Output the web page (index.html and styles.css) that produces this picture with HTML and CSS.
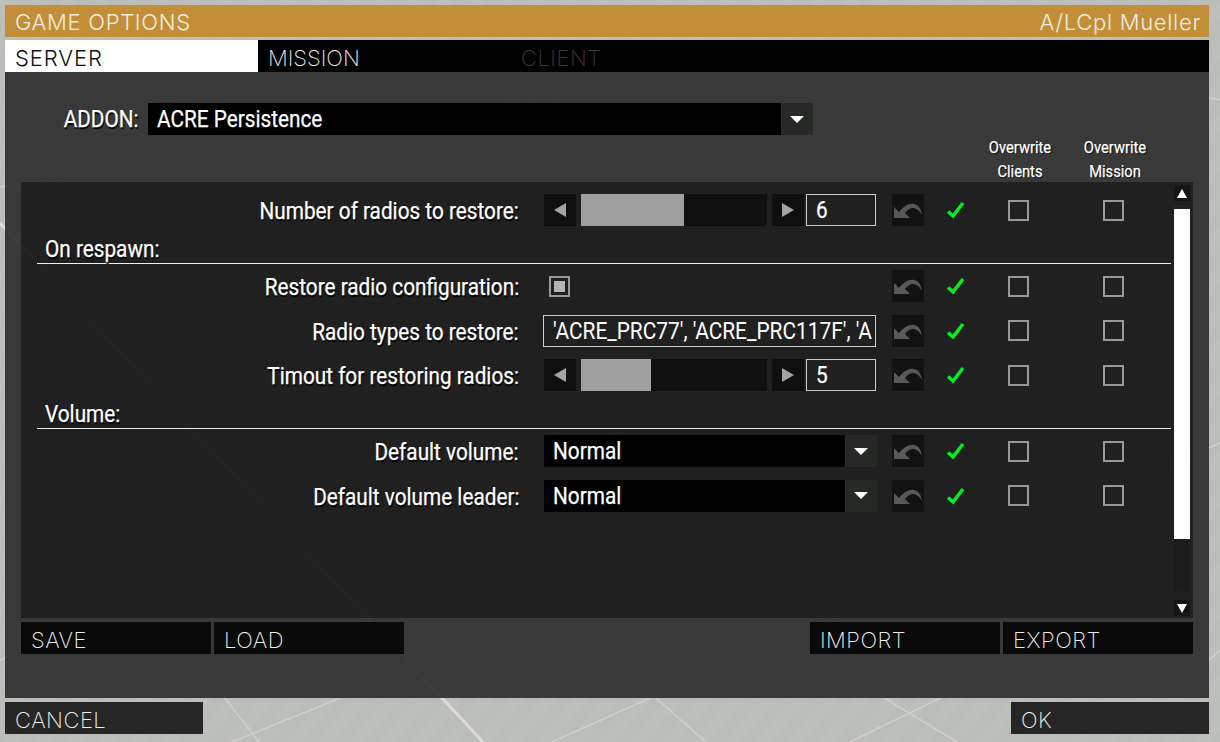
FILE: index.html
```html
<!DOCTYPE html>
<html lang="en">
<head>
    <meta charset="UTF-8">
    <title>Game Options</title>
    <link rel="stylesheet" href="styles.css">
</head>
<body>
<svg class="bg-lines" width="1220" height="742" viewBox="0 0 1220 742">
    <path class="line-thick" d="M0 223 L483 742" />
    <path d="M552 742 L1220 443 M567 620 L706 742 M232 742 L532 620 M190 653 L259 742 M0 187 L620 85 M1097 72 L1220 100 M810 653 L957 742 M850 742 L1060 640 M1209 660 L1220 650 M0 660 L40 645" />
</svg>
<div class="dialog">
    <header class="title-bar">
        <span>GAME OPTIONS</span>
        <span>A/LCpl Mueller</span>
    </header>
    <nav class="tabs">
        <div class="tab active">SERVER</div>
        <div class="tab">MISSION</div>
        <div class="tab disabled">CLIENT</div>
    </nav>
    <main class="panel">
        <div class="addon-row">
            <label class="addon-label"><span class="cond cond-right">ADDON:</span></label>
            <div class="combo addon-combo">
                <div class="combo-value"><span class="cond">ACRE Persistence</span></div>
                <div class="combo-arrow"><svg width="16" height="9" viewBox="0 0 16 9"><path d="M1 1 H15 L8 8 Z" fill="#fff"/></svg></div>
            </div>
        </div>
        <div class="overwrite-heads">
            <div class="overwrite-head"><span class="cond cond-center">Overwrite<br>Clients</span></div>
            <div class="overwrite-head"><span class="cond cond-center">Overwrite<br>Mission</span></div>
        </div>
        <section class="list">
            <div class="rows">
                <div class="row row-first">
                    <div class="row-label"><span class="cond cond-right">Number of radios to restore:</span></div>
                    <div class="control slider">
                        <div class="slider-btn"><svg width="14" height="16" viewBox="0 0 14 16"><path d="M13 1 V15 L1 8 Z"/></svg></div>
                        <div class="slider-track"><div class="slider-fill fill-six"></div></div>
                        <div class="slider-btn"><svg width="14" height="16" viewBox="0 0 14 16"><path d="M1 1 V15 L13 8 Z"/></svg></div>
                        <div class="edit-box slider-edit"><span class="cond">6</span></div>
                    </div>
                    <div class="reset-btn"><svg width="32" height="32" viewBox="0 0 32 32"><path d="M2 13 L7 18 C12 12 17 9 22 10 C27 11 29 15 30 21 C27 16 24 14 21 14 C18 14 15 16 13 19 L18 24 H2 Z"/></svg></div>
                    <svg class="check" width="20" height="20" viewBox="0 0 20 20"><path d="M3 11.5 L8 16 L18 3"/></svg>
                    <div class="box-cell"><div class="checkbox"></div></div>
                    <div class="box-cell"><div class="checkbox"></div></div>
                </div>
                <div class="group-head"><span class="cond">On respawn:</span></div>
                <div class="row row-tight">
                    <div class="row-label"><span class="cond cond-right">Restore radio configuration:</span></div>
                    <div class="control"><div class="checkbox checked"></div></div>
                    <div class="reset-btn"><svg width="32" height="32" viewBox="0 0 32 32"><path d="M2 13 L7 18 C12 12 17 9 22 10 C27 11 29 15 30 21 C27 16 24 14 21 14 C18 14 15 16 13 19 L18 24 H2 Z"/></svg></div>
                    <svg class="check" width="20" height="20" viewBox="0 0 20 20"><path d="M3 11.5 L8 16 L18 3"/></svg>
                    <div class="box-cell"><div class="checkbox"></div></div>
                    <div class="box-cell"><div class="checkbox"></div></div>
                </div>
                <div class="row">
                    <div class="row-label"><span class="cond cond-right">Radio types to restore:</span></div>
                    <div class="control"><div class="edit-box wide-edit"><span class="cond cond-wide">'ACRE_PRC77', 'ACRE_PRC117F', 'A</span></div></div>
                    <div class="reset-btn"><svg width="32" height="32" viewBox="0 0 32 32"><path d="M2 13 L7 18 C12 12 17 9 22 10 C27 11 29 15 30 21 C27 16 24 14 21 14 C18 14 15 16 13 19 L18 24 H2 Z"/></svg></div>
                    <svg class="check" width="20" height="20" viewBox="0 0 20 20"><path d="M3 11.5 L8 16 L18 3"/></svg>
                    <div class="box-cell"><div class="checkbox"></div></div>
                    <div class="box-cell"><div class="checkbox"></div></div>
                </div>
                <div class="row">
                    <div class="row-label"><span class="cond cond-right">Timout for restoring radios:</span></div>
                    <div class="control slider">
                        <div class="slider-btn"><svg width="14" height="16" viewBox="0 0 14 16"><path d="M13 1 V15 L1 8 Z"/></svg></div>
                        <div class="slider-track"><div class="slider-fill fill-five"></div></div>
                        <div class="slider-btn"><svg width="14" height="16" viewBox="0 0 14 16"><path d="M1 1 V15 L13 8 Z"/></svg></div>
                        <div class="edit-box slider-edit"><span class="cond">5</span></div>
                    </div>
                    <div class="reset-btn"><svg width="32" height="32" viewBox="0 0 32 32"><path d="M2 13 L7 18 C12 12 17 9 22 10 C27 11 29 15 30 21 C27 16 24 14 21 14 C18 14 15 16 13 19 L18 24 H2 Z"/></svg></div>
                    <svg class="check" width="20" height="20" viewBox="0 0 20 20"><path d="M3 11.5 L8 16 L18 3"/></svg>
                    <div class="box-cell"><div class="checkbox"></div></div>
                    <div class="box-cell"><div class="checkbox"></div></div>
                </div>
                <div class="group-head"><span class="cond">Volume:</span></div>
                <div class="row row-tight">
                    <div class="row-label"><span class="cond cond-right">Default volume:</span></div>
                    <div class="control combo">
                        <div class="combo-value"><span class="cond">Normal</span></div>
                        <div class="combo-arrow"><svg width="16" height="9" viewBox="0 0 16 9"><path d="M1 1 H15 L8 8 Z" fill="#fff"/></svg></div>
                    </div>
                    <div class="reset-btn"><svg width="32" height="32" viewBox="0 0 32 32"><path d="M2 13 L7 18 C12 12 17 9 22 10 C27 11 29 15 30 21 C27 16 24 14 21 14 C18 14 15 16 13 19 L18 24 H2 Z"/></svg></div>
                    <svg class="check" width="20" height="20" viewBox="0 0 20 20"><path d="M3 11.5 L8 16 L18 3"/></svg>
                    <div class="box-cell"><div class="checkbox"></div></div>
                    <div class="box-cell"><div class="checkbox"></div></div>
                </div>
                <div class="row">
                    <div class="row-label"><span class="cond cond-right">Default volume leader:</span></div>
                    <div class="control combo">
                        <div class="combo-value"><span class="cond">Normal</span></div>
                        <div class="combo-arrow"><svg width="16" height="9" viewBox="0 0 16 9"><path d="M1 1 H15 L8 8 Z" fill="#fff"/></svg></div>
                    </div>
                    <div class="reset-btn"><svg width="32" height="32" viewBox="0 0 32 32"><path d="M2 13 L7 18 C12 12 17 9 22 10 C27 11 29 15 30 21 C27 16 24 14 21 14 C18 14 15 16 13 19 L18 24 H2 Z"/></svg></div>
                    <svg class="check" width="20" height="20" viewBox="0 0 20 20"><path d="M3 11.5 L8 16 L18 3"/></svg>
                    <div class="box-cell"><div class="checkbox"></div></div>
                    <div class="box-cell"><div class="checkbox"></div></div>
                </div>
            </div>
            <div class="scrollbar">
                <div class="scroll-btn"><svg width="10" height="9" viewBox="0 0 10 9"><path d="M5 0 L10 9 H0 Z" fill="#fff"/></svg></div>
                <div class="scroll-track"><div class="scroll-thumb"></div></div>
                <div class="scroll-btn"><svg width="10" height="9" viewBox="0 0 10 9"><path d="M0 0 H10 L5 9 Z" fill="#fff"/></svg></div>
            </div>
        </section>
        <div class="panel-buttons">
            <div class="btn-group">
                <div class="btn">SAVE</div>
                <div class="btn">LOAD</div>
            </div>
            <div class="btn-group">
                <div class="btn">IMPORT</div>
                <div class="btn">EXPORT</div>
            </div>
        </div>
    </main>
    <footer class="footer">
        <div class="btn footer-btn">CANCEL</div>
        <div class="btn footer-btn">OK</div>
    </footer>
</div>
</body>
</html>
```

FILE: styles.css
```css
* {
    box-sizing: border-box;
}
html, body {
    height: 100%;
}
body {
    margin: 0;
    overflow: hidden;
    font-family: Roboto, "Liberation Sans", sans-serif;
    color: #fff;
    background-color: #bbbdb9;
    background-image: repeating-linear-gradient(130deg, rgba(255, 255, 255, 0.035) 0 12px, transparent 12px 24px);
}
.bg-lines {
    position: absolute;
    left: 0;
    top: 0;
}
.bg-lines path {
    stroke: #cfd0cd;
    stroke-width: 1.5;
    fill: none;
}
.bg-lines .line-thick {
    stroke: #dcdddb;
    stroke-width: 3;
}
.dialog {
    position: relative;
    width: 1204px;
    margin: 5px 0 0 5px;
}

/* Roboto has no condensed cut installed, so squeeze it */
.cond {
    display: inline-block;
    transform: scaleX(0.865);
    transform-origin: left center;
    white-space: nowrap;
    -webkit-text-stroke: 0.25px #fff;
}
.cond-right {
    transform-origin: right center;
}
.cond-center {
    transform-origin: center center;
}
.cond-wide {
    width: 350px;
    transform: scaleX(0.87);
    -webkit-text-stroke: 0;
}

/* header + tabs */
.title-bar {
    display: flex;
    justify-content: space-between;
    align-items: center;
    height: 32px;
    padding: 2px 8px 0 10px;
    background: #c28f38;
    color: #f1ece0;
    font-family: Inter, sans-serif;
    font-weight: 300;
    font-size: 22px;
    letter-spacing: 0.7px;
}
.tabs {
    display: flex;
    height: 32px;
    margin-top: 3px;
    background: #000;
    font-family: Inter, sans-serif;
    font-weight: 200;
    font-size: 22px;
}
.tab {
    width: 253px;
    padding: 0 10px;
    line-height: 36px;
    color: #e8e8e8;
}
.tab.active {
    background: #fff;
    color: #111;
    font-weight: 300;
    letter-spacing: 0.9px;
}
.tab.disabled {
    color: #3a3a3a;
    letter-spacing: 0.5px;
}

/* main panel */
.panel {
    height: 626px;
    padding: 31px 16px 0;
    background: rgba(46, 46, 46, 0.92);
}
.addon-row {
    display: flex;
    align-items: center;
    height: 32px;
}
.addon-label {
    width: 127px;
    padding-right: 9px;
    text-align: right;
    font-size: 24px;
    text-shadow: 1px 2px 1px #000;
}
.combo {
    display: flex;
    height: 32px;
}
.addon-combo {
    width: 665px;
}
.combo-value {
    flex: 1;
    padding-left: 9px;
    background: #000;
    font-size: 24px;
    line-height: 33px;
}
.combo-arrow {
    display: flex;
    width: 32px;
    align-items: center;
    justify-content: center;
    background: #272927;
}
.overwrite-heads {
    display: flex;
    height: 47px;
    padding-left: 951px;
}
.overwrite-head {
    width: 95px;
    text-align: center;
    font-size: 17px;
    line-height: 24px;
    text-shadow: 1px 1px 1px #000;
}

/* list */
.list {
    display: flex;
    height: 436px;
    background: rgba(0, 0, 0, 0.43);
}
.rows {
    width: 1153px;
    padding: 12px 3px 0 16px;
}
.row {
    display: flex;
    align-items: center;
    height: 32px;
    margin-top: 12.5px;
}
.row-first {
    margin-top: 0;
}
.row-tight {
    margin-top: 6px;
}
.row-label {
    width: 482px;
    flex: none;
    padding-top: 2px;
    text-align: right;
    font-size: 24px;
    text-shadow: 1px 2px 1px #000;
}
.control {
    width: 332px;
    margin: 0 16px 0 25px;
    flex: none;
}
.control.combo {
    width: 333px;
    margin-right: 15px;
}
.group-head {
    height: 32px;
    margin-top: 6px;
    padding-left: 8px;
    border-bottom: 1px solid #eee;
    font-size: 24px;
    line-height: 35px;
    text-shadow: 1px 2px 1px #000;
}
.slider {
    display: flex;
    height: 32px;
}
.slider-btn {
    display: flex;
    width: 32px;
    align-items: center;
    justify-content: center;
    background: #0f0f0f;
}
.slider-btn path {
    fill: #a4a4a4;
}
.slider-track {
    width: 186px;
    margin: 0 5px;
    background: #101010;
}
.slider-fill {
    height: 100%;
    background: #a0a0a0;
}
.fill-six {
    width: 103px;
}
.fill-five {
    width: 70px;
}
.edit-box {
    height: 32px;
    padding-left: 9px;
    border: 1px solid #ccc;
    font-size: 24px;
    line-height: 31px;
    overflow: hidden;
    white-space: nowrap;
}
.slider-edit {
    width: 70px;
    margin-left: 2px;
}
.wide-edit {
    width: 333px;
    margin-left: -1px;
}
.reset-btn {
    display: flex;
    width: 32px;
    height: 32px;
    flex: none;
    background: #121212;
}
.reset-btn path {
    fill: #585858;
}
.check {
    flex: none;
    margin: 0 6px 0 21px;
}
.check path {
    fill: none;
    stroke: #00ee22;
    stroke-width: 3.5;
}
.box-cell {
    display: flex;
    flex: none;
    width: 95px;
    justify-content: center;
}
.checkbox {
    width: 21px;
    height: 21px;
    border: 2px solid #999;
}
.checkbox.checked {
    margin-left: 5px;
    padding: 3px;
}
.checkbox.checked::after {
    content: "";
    display: block;
    width: 11px;
    height: 11px;
    background: #b5b5b5;
}

/* scrollbar */
.scrollbar {
    display: flex;
    flex-direction: column;
    width: 16px;
    height: 431px;
    margin-top: 3px;
}
.scroll-btn {
    display: flex;
    height: 16px;
    align-items: center;
    justify-content: center;
    background: #151515;
}
.scroll-track {
    flex: 1;
    margin: 8px 0 9px;
    background: #1c1c1c;
}
.scroll-thumb {
    height: 330px;
    background: #fff;
}

/* buttons */
.panel-buttons {
    display: flex;
    justify-content: space-between;
    margin-top: 4px;
}
.btn-group {
    display: flex;
    gap: 3px;
}
.btn {
    width: 190px;
    height: 32px;
    padding-left: 10px;
    background: #0a0a0a;
    color: #eee;
    font-family: Inter, sans-serif;
    font-weight: 200;
    font-size: 22px;
    line-height: 37px;
    letter-spacing: 0.5px;
}
.footer {
    display: flex;
    justify-content: space-between;
    margin-top: 4px;
}
.footer-btn {
    width: 198px;
    background: #262626;
}
```
